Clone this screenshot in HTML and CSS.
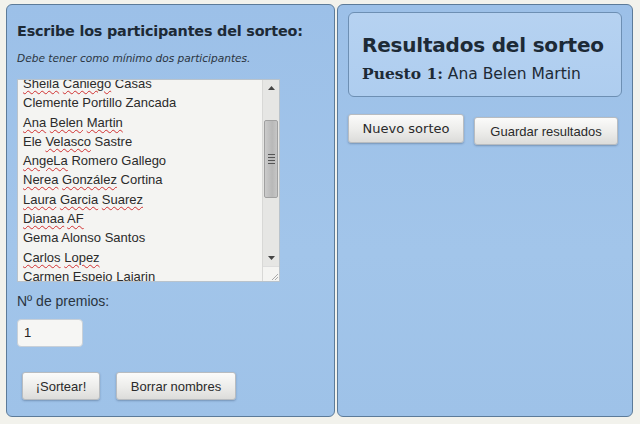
FILE: index.html
```html
<!DOCTYPE html>
<html lang="es">
<head>
<meta charset="utf-8">
<link rel="stylesheet" href="styles.css">
</head>
<body>
<div class="page">
  <section class="panel left">
    <h2 class="title">Escribe los participantes del sorteo:</h2>
    <p class="hint">Debe tener como mínimo dos participantes.</p>
    <div class="listbox">
      <div class="lines">
        <div><span class="sp">Sheila</span> <span class="sp">Caniego</span> Casas</div>
        <div>Clemente Portillo Zancada</div>
        <div><span class="sp">Ana</span> <span class="sp">Belen</span> <span class="sp">Martin</span></div>
        <div>Ele <span class="sp">Velasco</span> Sastre</div>
        <div><span class="sp">AngeLa</span> Romero Gallego</div>
        <div><span class="sp">Nerea</span> <span class="sp">González</span> Cortina</div>
        <div><span class="sp">Laura</span> <span class="sp">Garcia</span> <span class="sp">Suarez</span></div>
        <div><span class="sp">Dianaa</span> <span class="sp">AF</span></div>
        <div>Gema Alonso Santos</div>
        <div><span class="sp">Carlos</span> <span class="sp">Lopez</span></div>
        <div>Carmen Espejo Lajarin</div>
      </div>
      <div class="scrollbar">
        <div class="arrow up"><svg width="7" height="4" viewBox="0 0 7 4"><path d="M0 4 L3.5 0 L7 4 Z" fill="#444"/></svg></div>
        <div class="track">
          <div class="thumb"><span></span><span></span><span></span><span></span></div>
        </div>
        <div class="arrow down"><svg width="7" height="4" viewBox="0 0 7 4"><path d="M0 0 L3.5 4 L7 0 Z" fill="#444"/></svg></div>
        <div class="grip"><svg width="10" height="10" viewBox="0 0 10 10"><path d="M9 3 L3 9 M9 6 L6 9" stroke="#aaa" stroke-width="1"/></svg></div>
      </div>
    </div>
    <label class="premios">Nº de premios:</label>
    <div class="num">1</div>
    <div class="btnrow">
      <button class="btn">¡Sortear!</button>
      <button class="btn">Borrar nombres</button>
    </div>
  </section>
  <section class="panel right">
    <div class="result">
      <h1 class="rtitle">Resultados del sorteo</h1>
      <p class="puesto"><b>Puesto 1:</b> Ana Belen Martin</p>
    </div>
    <div class="btnrow2">
      <button class="btn b-nuevo">Nuevo sorteo</button>
      <button class="btn b-guardar">Guardar resultados</button>
    </div>
  </section>
</div>
</body>
</html>
```
FILE: styles.css
```css
html, body { margin: 0; padding: 0; }
body {
  background: #f2f2ec;
  width: 640px;
  height: 424px;
  overflow: hidden;
  font-family: "Liberation Sans", Arial, sans-serif;
}
.page {
  display: flex;
  gap: 2px;
  padding: 4px 7px 7px 6px;
  height: 413px;
}
.panel {
  box-sizing: border-box;
  height: 413px;
  background: linear-gradient(180deg, #9cc0e8 0%, #a2c5ea 60%, #9ec2e8 100%);
  border: 1px solid #5c7b99;
  border-radius: 6px;
}
.left { width: 329px; padding: 0 0 0 10px; }
.right { width: 296px; padding: 7px 10px 0 10px; }

.title {
  margin: 0;
  padding-top: 16px;
  font-family: "DejaVu Sans", sans-serif;
  font-weight: bold;
  font-size: 14.4px;
  letter-spacing: -0.2px;
  color: #1d2a36;
  line-height: 20px;
}
.hint {
  margin: 11px 0 0 0;
  font-family: "DejaVu Sans", sans-serif;
  font-style: italic;
  font-size: 10.6px;
  color: #2a3440;
  line-height: 13px;
}
.listbox {
  position: relative;
  margin-top: 14px;
  width: 263px;
  height: 203px;
  box-sizing: border-box;
  background: #f4f4f2;
  border: 1px solid #b9c3cc;
  overflow: hidden;
}
.lines {
  margin-top: -6px;
  padding-left: 5px;
  font-size: 13px;
  line-height: 19.3px;
  color: #2b2b2b;
}
.sp {
  text-decoration: underline wavy #d03030;
  text-decoration-thickness: 1px;
  text-underline-offset: 2px;
}
.scrollbar {
  position: absolute;
  top: 0; right: 0;
  width: 16px;
  height: 201px;
  background: #e6e6e4;
  border-left: 1px solid #d8d8d6;
  display: flex;
  flex-direction: column;
}
.arrow { height: 16px; display: flex; align-items: center; justify-content: center; }
.track { flex: 1; position: relative; }
.thumb {
  position: absolute;
  left: 1px; right: 1px;
  top: 24px;
  height: 76px;
  background: linear-gradient(90deg, #cbcbcb, #b8b8b8 60%, #c6c6c6);
  border: 1px solid #a0a0a0;
  border-radius: 2px;
  display: flex;
  flex-direction: column;
  align-items: center;
  justify-content: center;
  gap: 2px;
}
.thumb span { width: 7px; height: 1px; background: #555; }
.grip { height: 14px; background: #f4f4f2; display: flex; align-items: flex-end; justify-content: flex-end; border-top: 1px solid #ddd; }

.premios {
  display: block;
  margin-top: 11px;
  font-size: 14px;
  color: #2a3440;
  line-height: 16px;
}
.num {
  margin-top: 10px;
  width: 66px;
  height: 28px;
  box-sizing: border-box;
  background: #f6f6f4;
  border: 1px solid #c8d0d8;
  border-radius: 4px;
  font-size: 13px;
  line-height: 26px;
  padding-left: 6px;
  color: #222;
}
.btnrow {
  display: flex;
  gap: 16px;
  margin: 25px 0 0 5px;
}
.btn {
  height: 28px;
  box-sizing: border-box;
  padding: 0 12px;
  font-family: "Liberation Sans", Arial, sans-serif;
  font-size: 13px;
  color: #2a2a2a;
  background: linear-gradient(180deg, #fbfbfa 0%, #ececea 55%, #dcdcda 100%);
  border: 1px solid #b8bcc0;
  border-radius: 3px;
  box-shadow: 0 1px 2px rgba(40,60,90,0.35);
}
.btnrow .btn:first-child { width: 78px; padding: 0; }
.btnrow .btn:last-child { width: 120px; padding: 0; }

.result {
  box-sizing: border-box;
  height: 85px;
  background: linear-gradient(180deg, #b6d2f1, #aecdef);
  border: 1px solid #6d8fb3;
  border-radius: 6px;
  padding: 19px 0 0 13px;
}
.rtitle {
  margin: 0;
  font-family: "DejaVu Sans", sans-serif;
  font-weight: bold;
  font-size: 20px;
  letter-spacing: -0.2px;
  line-height: 26px;
  color: #1d2a36;
}
.puesto {
  margin: 6px 0 0 0;
  font-family: "DejaVu Sans", sans-serif;
  font-size: 15.5px;
  line-height: 20px;
  color: #1d2a36;
}
.puesto b { font-family: "DejaVu Serif", serif; }
.btnrow2 {
  display: flex;
  gap: 10px;
  margin-top: 17px;
  align-items: flex-start;
}
.b-nuevo { width: 116px; height: 29px; padding: 0; font-family: "DejaVu Sans", sans-serif; font-size: 13px; }
.b-guardar { width: 144px; height: 28px; padding: 0; margin-top: 3px; }
```
